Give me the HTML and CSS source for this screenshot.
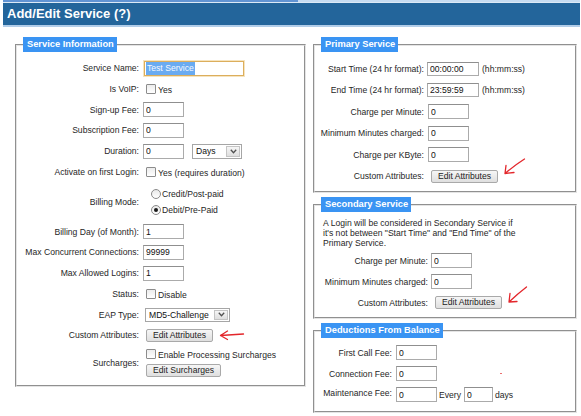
FILE: index.html
```html
<!DOCTYPE html>
<html>
<head>
<meta charset="utf-8">
<title>Add/Edit Service</title>
<link rel="stylesheet" href="styles.css">
</head>
<body>
<div class="topstrip"><span class="tab"></span></div>
<h1 class="title">Add/Edit Service (?)</h1>
<div class="content">
  <fieldset class="box box-main">
    <legend>Service Information</legend>
    <div class="form form-main">
      <label>Service Name:</label>
      <div class="ctl"><span class="txt txt-focus"><span class="sel">Test Service</span></span></div>

      <label>Is VoIP:</label>
      <div class="ctl"><input type="checkbox" class="chk"><span class="opt">Yes</span></div>

      <label>Sign-up Fee:</label>
      <div class="ctl"><input type="text" class="txt" value="0"></div>

      <label>Subscription Fee:</label>
      <div class="ctl"><input type="text" class="txt" value="0"></div>

      <label>Duration:</label>
      <div class="ctl"><input type="text" class="txt" value="0"><span class="select select-days"><span class="select-val">Days</span><span class="select-btn"><svg width="7" height="5" viewBox="0 0 7 5"><path d="M0.8 0.8 L3.5 3.8 L6.2 0.8" fill="none" stroke="#505050" stroke-width="1.3"/></svg></span></span></div>

      <label>Activate on first Login:</label>
      <div class="ctl"><input type="checkbox" class="chk"><span class="opt">Yes (requires duration)</span></div>

      <label>Billing Mode:</label>
      <div class="ctl ctl-stack">
        <span class="line"><input type="radio" name="bm" class="rad"><span>Credit/Post-paid</span></span>
        <span class="line"><input type="radio" name="bm" class="rad" checked><span>Debit/Pre-Paid</span></span>
      </div>

      <label>Billing Day (of Month):</label>
      <div class="ctl"><input type="text" class="txt" value="1"></div>

      <label>Max Concurrent Connections:</label>
      <div class="ctl"><input type="text" class="txt" value="99999"></div>

      <label>Max Allowed Logins:</label>
      <div class="ctl"><input type="text" class="txt" value="1"></div>

      <label>Status:</label>
      <div class="ctl"><input type="checkbox" class="chk"><span class="opt">Disable</span></div>

      <label>EAP Type:</label>
      <div class="ctl"><span class="select select-eap"><span class="select-val">MD5-Challenge</span><span class="select-btn"><svg width="7" height="5" viewBox="0 0 7 5"><path d="M0.8 0.8 L3.5 3.8 L6.2 0.8" fill="none" stroke="#505050" stroke-width="1.3"/></svg></span></span></div>

      <label>Custom Attributes:</label>
      <div class="ctl"><button type="button" class="btn">Edit Attributes</button><svg class="arrow arrow-left" width="26" height="12" viewBox="0 0 26 12"><path d="M1.5 6.5 L24.5 5 M1.5 6.5 L8.5 2 M1.5 6.5 L8.5 10.5" fill="none" stroke="#e3262b" stroke-width="1.3" stroke-linecap="round"/></svg></div>

      <label>Surcharges:</label>
      <div class="ctl ctl-stack ctl-sur">
        <span class="line"><input type="checkbox" class="chk"><span class="opt">Enable Processing Surcharges</span></span>
        <span class="line"><button type="button" class="btn">Edit Surcharges</button></span>
      </div>
    </div>
  </fieldset>

  <div class="side">
    <fieldset class="box">
      <legend>Primary Service</legend>
      <div class="form form-primary">
        <label>Start Time (24 hr format):</label>
        <div class="ctl"><input type="text" class="txt txt-time" value="00:00:00"><span class="hint">(hh:mm:ss)</span></div>

        <label>End Time (24 hr format):</label>
        <div class="ctl"><input type="text" class="txt txt-time" value="23:59:59"><span class="hint">(hh:mm:ss)</span></div>

        <label>Charge per Minute:</label>
        <div class="ctl"><input type="text" class="txt txt-in" value="0"></div>

        <label>Minimum Minutes charged:</label>
        <div class="ctl"><input type="text" class="txt txt-in" value="0"></div>

        <label>Charge per KByte:</label>
        <div class="ctl"><input type="text" class="txt txt-in" value="0"></div>

        <label>Custom Attributes:</label>
        <div class="ctl"><button type="button" class="btn btn-in">Edit Attributes</button><svg class="arrow arrow-diag" width="24" height="19" viewBox="0 0 24 19"><path d="M21.5 2 Q12 8 2 16.5 M2 16.5 L3 8.5 M2 16.5 L11 15.5" fill="none" stroke="#e3262b" stroke-width="1.3" stroke-linecap="round"/></svg></div>
      </div>
    </fieldset>

    <fieldset class="box box-sec">
      <legend>Secondary Service</legend>
      <p class="note">A Login will be considered in Secondary Service if it's not between "Start Time" and "End Time" of the Primary Service.</p>
      <div class="form form-secondary">
        <label>Charge per Minute:</label>
        <div class="ctl"><input type="text" class="txt" value="0"></div>

        <label>Minimum Minutes charged:</label>
        <div class="ctl"><input type="text" class="txt" value="0"></div>

        <label>Custom Attributes:</label>
        <div class="ctl"><button type="button" class="btn btn-in">Edit Attributes</button><svg class="arrow arrow-diag2" width="22" height="19" viewBox="0 0 22 19"><path d="M19.5 2 Q11 8.5 2 17 M2 17 L3 8.5 M2 17 L10 16.5" fill="none" stroke="#e3262b" stroke-width="1.3" stroke-linecap="round"/></svg></div>
      </div>
    </fieldset>

    <fieldset class="box box-ded">
      <legend>Deductions From Balance</legend>
      <div class="form form-deduct">
        <label>First Call Fee:</label>
        <div class="ctl"><input type="text" class="txt" value="0"></div>

        <label>Connection Fee:</label>
        <div class="ctl"><input type="text" class="txt" value="0"><span class="mark"></span></div>

        <label class="lbl-up">Maintenance Fee:</label>
        <div class="ctl"><input type="text" class="txt" value="0"><span class="word">Every</span><input type="text" class="txt txt-small" value="0"><span class="word">days</span></div>
      </div>
    </fieldset>
  </div>
</div>
</body>
</html>
```
FILE: styles.css
```css
* { box-sizing: border-box; }

body {
  margin: 0;
  background: #fff;
  color: #262626;
  font-family: "Liberation Sans", Arial, sans-serif;
  font-size: 8.6px;
}

.topstrip {
  display: flex;
  height: 3px;
  margin: 0 1px 0 3px;
  background: #c6dbf1;
  border-bottom: 1px solid #dce9f6;
}
.topstrip .tab {
  width: 295px;
  background: #6294d3;
}

.title {
  margin: 0 1px 0 3px;
  height: 24px;
  padding-left: 4px;
  background: #23659b;
  border-bottom: 2px solid #b1cde9;
  color: #fff;
  font-size: 13px;
  font-weight: bold;
  line-height: 22px;
}

.content {
  display: flex;
  align-items: flex-start;
  gap: 7px;
  padding: 10px 0 0 15px;
}

.box {
  margin: 0;
  padding: 6px 0 4px;
  min-width: 0;
  border: 2px groove #e4e4e4;
}
.box legend {
  margin-left: 6px;
  padding: 1px 3px 1px 4px;
  background: #3a94f3;
  color: #fff;
  font-size: 9.3px;
  font-weight: bold;
  line-height: 13px;
}

.box-main { width: 291px; }

.side {
  display: flex;
  flex-direction: column;
  gap: 4px;
  width: 264px;
}

.form {
  display: grid;
  align-items: center;
}
.form label {
  text-align: right;
  white-space: nowrap;
}
.form-main {
  grid-template-columns: 122px auto;
  grid-template-rows: repeat(6, 20.7px) 39.3px repeat(6, 20.7px) 35.3px;
  column-gap: 4px;
}
.form-primary {
  grid-template-columns: 109px auto;
  grid-auto-rows: 21.5px;
  column-gap: 3px;
}
.form-secondary {
  grid-template-columns: 113px auto;
  grid-auto-rows: 21px;
  column-gap: 3px;
  margin-top: 2px;
}
.form-deduct {
  grid-template-columns: 77px auto;
  grid-auto-rows: 21px;
  column-gap: 4px;
}
.box-ded { padding: 4px 0 6px; }

.lbl-up { align-self: start; padding-top: 4px; }

.ctl {
  display: flex;
  align-items: center;
  height: 100%;
  white-space: nowrap;
}
.ctl-stack {
  flex-direction: column;
  align-items: flex-start;
  justify-content: center;
  gap: 3.5px;
}
.ctl-stack .line {
  display: flex;
  align-items: center;
  height: 13px;
}
.ctl-sur { gap: 5px; }
.ctl-sur .line:first-child { height: 10px; }

.txt {
  display: inline-block;
  width: 41px;
  height: 15px;
  margin: 0;
  padding: 0 2px;
  border: 1px solid #ababab;
  border-top-color: #8f8f8f;
  background: #fff;
  color: #111;
  font-family: inherit;
  font-size: 8.6px;
  line-height: 13px;
  outline: none;
}
.txt-focus {
  width: 100px;
  margin-left: 1px;
  padding: 0 1px;
  border: 1px solid #dcae5c;
  box-shadow: 0 0 0 1px #f6e4bf;
}
.sel {
  display: inline-block;
  padding: 0 1px;
  background: #6aabf1;
  color: #f6f9ff;
  line-height: 13px;
}
.txt-time { width: 52px; height: 14px; }
.txt-in { margin-left: 1px; }
.txt-small { width: 29px; }

.hint { margin-left: 3px; }
.word { margin: 0 3px 0 2px; }

.chk {
  appearance: none;
  -webkit-appearance: none;
  width: 10px;
  height: 10px;
  margin: 0 2px 0 3px;
  border: 1px solid #8c8c8c;
  border-radius: 1px;
  background: linear-gradient(#ececec, #fff);
}
.opt { padding-top: 2px; }

.rad {
  appearance: none;
  -webkit-appearance: none;
  width: 10px;
  height: 10px;
  margin: 0 1px 0 8px;
  border: 1px solid #8a8a8a;
  border-radius: 50%;
  background: linear-gradient(#e9e9e9, #fff);
  display: flex;
  align-items: center;
  justify-content: center;
}
.rad:checked::after {
  content: "";
  width: 4px;
  height: 4px;
  border-radius: 50%;
  background: #1a1a1a;
}

.select {
  display: inline-flex;
  align-items: stretch;
  height: 15px;
  border: 1px solid #a6a6a6;
  background: #fff;
}
.select-days { width: 50px; margin-left: 8px; }
.select-eap { width: 85px; height: 14px; margin-left: 2px; }
.select-val {
  flex: 1;
  padding-left: 3px;
  line-height: 13px;
  color: #111;
}
.select-eap .select-val { line-height: 12px; }
.select-btn {
  display: flex;
  align-items: center;
  justify-content: center;
  width: 14px;
  margin: 1px;
  border: 1px solid #c4c4c4;
  background: linear-gradient(#f6f6f6, #dedede);
}

.btn {
  height: 13px;
  margin: 0 0 0 3px;
  padding: 0 6px;
  border: 1px solid #a9a9a9;
  border-radius: 2px;
  background: linear-gradient(#f6f6f6, #dfdfdf);
  color: #1c1c1c;
  font-family: inherit;
  font-size: 8.6px;
  line-height: 11px;
}
.btn-in { margin-left: 4px; }

.arrow { flex: none; margin-left: 5px; }
.arrow-left { margin-left: 6px; }
.arrow-diag { align-self: flex-start; margin-top: -8.5px; }
.arrow-diag2 { align-self: flex-start; margin-top: -7px; }

.note {
  max-width: 200px;
  margin: 0;
  padding-left: 8px;
  box-sizing: content-box;
  line-height: 10px;
}

.mark {
  width: 2px;
  height: 1px;
  margin-left: 63px;
  background: #ec6f6f;
}
```
